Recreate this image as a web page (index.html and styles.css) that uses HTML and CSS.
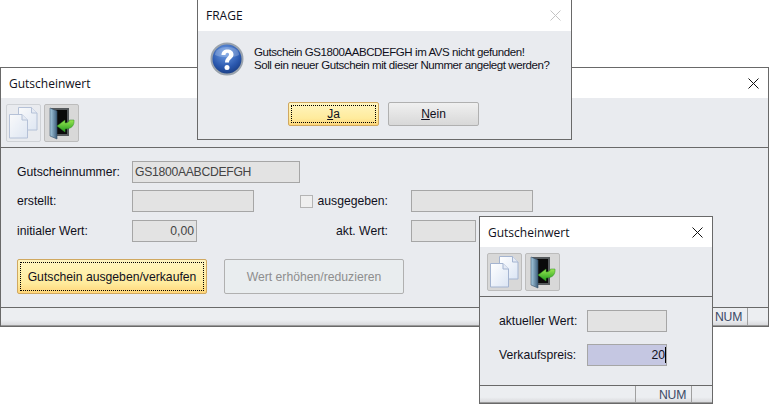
FILE: index.html
```html
<!DOCTYPE html>
<html lang="de">
  <head>
    <meta charset="UTF-8" />
    <title>Gutscheinwert</title>
    <link rel="stylesheet" href="styles.css">
  </head>
  <body>
    <svg class="defs" width="0" height="0">
      <defs>
        <linearGradient id="page" x1="0" y1="0" x2="1" y2="1">
          <stop offset="0" stop-color="#ffffff" />
          <stop offset="1" stop-color="#dbe5f4" />
        </linearGradient>
        <linearGradient id="doorside" x1="0" y1="0" x2="1" y2="0">
          <stop offset="0" stop-color="#a9cde2" />
          <stop offset="1" stop-color="#3e5f7c" />
        </linearGradient>
        <linearGradient id="arrow" x1="0" y1="0" x2="0" y2="1">
          <stop offset="0" stop-color="#9ae852" />
          <stop offset="1" stop-color="#1f9a1c" />
        </linearGradient>
        <radialGradient id="ball" cx="0.45" cy="0.3" r="0.8">
          <stop offset="0" stop-color="#6f9fe6" />
          <stop offset="0.6" stop-color="#2a57ad" />
          <stop offset="1" stop-color="#12316f" />
        </radialGradient>
        <symbol id="docs" viewBox="0 0 35 38">
          <path d="M12.500 3.500h13l5.500 5.500v17H12.500z" fill="url(#page)" stroke="#a4b4d0" />
          <path d="M25.500 3.500V9H31" fill="#e4eaf5" stroke="#a4b4d0" />
          <path d="M3.500 10.500h12.500l5.500 5.500v18H3.500z" fill="url(#page)" stroke="#a4b4d0" />
          <path d="M16 10.500V16h5.500" fill="#e4eaf5" stroke="#a4b4d0" />
        </symbol>
        <symbol id="door" viewBox="0 0 35 38">
          <path d="M7 4h18v28H7z" fill="#55595c" />
          <path d="M12 6h11v24H12z" fill="#0a0a0a" />
          <path d="M6 4l7 3v28l-7-3z" fill="url(#doorside)" stroke="#35506a" stroke-width=".6" />
          <path d="M30 16c.5 5-2 9-9 9v3l-8-6 8-6v3c3 0 4-1 4.500-3z" fill="url(#arrow)" stroke="#2f8f22" stroke-width=".5" />
        </symbol>
      </defs>
    </svg>

    <!-- main window -->
    <section class="window window--main">
      <header class="titlebar">
        <span>Gutscheinwert</span>
        <svg class="close" width="11" height="11" viewBox="0 0 11 11"><path d="M.5.5l10 10M10.500.5l-10 10" /></svg>
      </header>
      <div class="toolbar">
        <button type="button" class="tool tool--faded"><svg width="35" height="38"><use href="#docs" /></svg></button>
        <button type="button" class="tool tool--dark"><svg width="35" height="38"><use href="#door" /></svg></button>
      </div>
      <div class="content">
        <div class="form">
          <label>Gutscheinnummer:</label>
          <div class="field field--number">GS1800AABCDEFGH</div>

          <label>erstellt:</label>
          <div class="field"></div>
          <div class="side-label"><span class="checkbox"></span>ausgegeben:</div>
          <div class="field"></div>

          <label>initialer Wert:</label>
          <div class="field field--short field--right">0,00</div>
          <div class="side-label">akt. Wert:</div>
          <div class="field field--short"></div>
        </div>
        <div class="actions">
          <button type="button" class="btn btn--default btn--sell"><span>Gutschein ausgeben/verkaufen</span></button>
          <button type="button" class="btn btn--disabled" disabled>Wert erhöhen/reduzieren</button>
        </div>
      </div>
      <footer class="statusbar">
        <span class="pane pane--num">NUM</span>
        <span class="pane pane--end"></span>
      </footer>
    </section>

    <!-- question dialog -->
    <section class="window window--dialog">
      <header class="titlebar">
        <span>FRAGE</span>
        <svg class="close close--off" width="11" height="11" viewBox="0 0 11 11"><path d="M.5.5l10 10M10.500.5l-10 10" /></svg>
      </header>
      <div class="dialog-body">
        <div class="message">
          <svg class="question" width="34" height="34" viewBox="0 0 34 34">
            <circle cx="17" cy="17" r="15.500" fill="url(#ball)" stroke="#9aa3ad" stroke-width="2" />
            <path d="M17 5c8 0 12 3 12 8-5 3-18 3-24 0 0-5 5-8 12-8z" fill="#ffffff" opacity=".22" />
            <path d="M11.500 13c0-3.500 2.500-5.500 6-5.500s6 2 6 5c0 4-4.500 4.500-4.500 8h-4c0-5 4-5.500 4-8 0-1-.6-1.700-1.600-1.700-1.300 0-1.900 1-1.900 2.200z" fill="#ffffff" />
            <circle cx="17" cy="25.500" r="2.500" fill="#ffffff" />
          </svg>
          <p>Gutschein GS1800AABCDEFGH im AVS nicht gefunden!<br>Soll ein neuer Gutschein mit dieser Nummer angelegt werden?</p>
        </div>
        <div class="dialog-actions">
          <button type="button" class="btn btn--default btn--dialog"><span><u>J</u>a</span></button>
          <button type="button" class="btn btn--plain btn--dialog"><u>N</u>ein</button>
        </div>
      </div>
    </section>

    <!-- small window -->
    <section class="window window--small">
      <header class="titlebar">
        <span>Gutscheinwert</span>
        <svg class="close" width="11" height="11" viewBox="0 0 11 11"><path d="M.5.5l10 10M10.500.5l-10 10" /></svg>
      </header>
      <div class="toolbar">
        <button type="button" class="tool tool--dark"><svg width="35" height="38"><use href="#docs" /></svg></button>
        <button type="button" class="tool tool--dark"><svg width="35" height="38"><use href="#door" /></svg></button>
      </div>
      <div class="content content--small">
        <div class="row">
          <label>aktueller Wert:</label>
          <div class="field field--price"></div>
        </div>
        <div class="row">
          <label>Verkaufspreis:</label>
          <div class="field field--price field--input">20<i class="caret"></i></div>
        </div>
      </div>
      <footer class="statusbar">
        <span class="pane pane--blank"></span>
        <span class="pane pane--num">NUM</span>
        <span class="pane pane--end"></span>
      </footer>
    </section>
  </body>
</html>
```

FILE: styles.css
```css
* {
  box-sizing: border-box;
}

body {
  margin: 0;
  width: 769px;
  height: 405px;
  position: relative;
  overflow: hidden;
  background-color: #ffffff;
  font-family: "Liberation Sans", Arial, sans-serif;
  font-size: 12.2px;
  color: #101020;
}

.defs {
  position: absolute;
}

/* Windows sit on a free desktop */
.window {
  position: absolute;
  display: flex;
  flex-direction: column;
  background-color: #e9ebef;
  border: 1px solid #696969;
}
.window--main {
  left: 0;
  top: 67px;
  width: 769px;
  height: 260px;
}
.window--dialog {
  left: 197px;
  top: -1px;
  width: 375px;
  height: 141px;
}
.window--small {
  left: 479px;
  top: 216px;
  width: 234px;
  height: 188px;
}

.titlebar {
  height: 30px;
  flex: none;
  display: flex;
  align-items: center;
  justify-content: space-between;
  padding: 0 9px 0 8px;
  background-color: #ffffff;
  font-family: "Open Sans", sans-serif;
  font-size: 12px;
}
.close {
  fill: none;
  stroke: #111111;
  stroke-width: 1;
}
.close--off {
  stroke: #c4c4c4;
  margin-right: 1px;
  margin-top: -1px;
}
.window--dialog .titlebar {
  height: 31px;
}

/* Toolbar */
.toolbar {
  height: 50px;
  flex: none;
  display: flex;
  align-items: center;
  gap: 3px;
  padding-left: 7px;
  border-bottom: 1px solid #696969;
}
.window--main .toolbar {
  padding-left: 5px;
}
.tool {
  width: 35px;
  height: 38px;
  padding: 0;
  border: 1px solid #bcbcbc;
  border-radius: 2px;
  background-color: #e9ebef;
}
.tool svg {
  display: block;
  margin: -1px;
}
.tool--dark {
  background-color: #d8d8d8;
}
.tool--faded {
  border-color: #cfd2d6;
}
.tool--faded svg {
  opacity: .75;
}

/* Form in main window */
.content {
  flex: 1;
  padding: 13px 0 0 16px;
}
.form {
  display: grid;
  grid-template-columns: 115px 122px 157px 122px;
  grid-template-rows: 29px 30px 22px;
  align-items: start;
}
label,
.side-label {
  line-height: 22px;
}
.side-label {
  display: flex;
  align-items: center;
  justify-content: flex-end;
  padding-right: 23px;
}
.checkbox {
  width: 13px;
  height: 13px;
  margin-right: 5px;
  background-color: #efefef;
  border: 1px solid #b4b4b4;
}
.field {
  height: 22px;
  line-height: 20px;
  padding: 0 2px;
  background-color: #e3e3e3;
  border: 1px solid #a6a6a6;
  color: #444444;
}
.field--number {
  width: 168px;
  grid-column: 2 / -1;
  white-space: nowrap;
  letter-spacing: -.3px;
}
.field--short {
  width: 65px;
}
.field--right {
  text-align: right;
}

.actions {
  display: flex;
  gap: 17px;
  margin-top: 17px;
}
.btn {
  height: 35px;
  padding: 0;
  border-radius: 2px;
  border: 1px solid #b0b0b0;
  font-family: inherit;
  font-size: 12.2px;
  color: #101020;
}
.btn--default {
  padding: 2px;
  border-color: #d0a860;
  background: linear-gradient(#fff5c0, #ffeb9c 70%, #ffd67a);
}
.btn--default span {
  display: flex;
  height: 100%;
  align-items: center;
  justify-content: center;
  border: 1px dotted #000000;
}
.btn--sell {
  width: 190px;
}
.btn--disabled {
  width: 180px;
  background-color: #e9edef;
  color: #8e8e8e;
}
.btn--plain {
  background: linear-gradient(#f0f0f0, #d8d8d8);
}
.btn--dialog {
  width: 91px;
  height: 24px;
  font-size: 12px;
}

/* Status bars */
.statusbar {
  height: 19px;
  flex: none;
  display: flex;
  justify-content: flex-end;
  border-top: 1px solid #696969;
  border-bottom: 1px solid #9a9a9a;
  background: linear-gradient(#eceef1 70%, #d9dadd);
  line-height: 17px;
  color: #3b4a66;
}
.window--small .statusbar {
  height: 18px;
}
.pane {
  border-right: 1px solid #a0a0a0;
  padding: 1px 4px 0 2px;
}
.pane--num {
  width: 35px;
  letter-spacing: -.2px;
}
.pane--blank {
  width: 22px;
  padding: 0;
  border-left: 1px solid #a0a0a0;
  border-right: none;
}
.pane--end {
  width: 20px;
  border-right: none;
  padding: 0;
}

/* Question dialog */
.dialog-body {
  flex: 1;
  display: flex;
  flex-direction: column;
  padding: 11px 0 0 12px;
}
.message {
  display: flex;
  align-items: center;
  gap: 10px;
}
.message p {
  margin: 0;
  font-size: 11.5px;
  line-height: 13px;
  letter-spacing: -.42px;
  white-space: nowrap;
}
.dialog-actions {
  display: flex;
  gap: 9px;
  margin-top: 26px;
  padding-left: 78px;
}

/* Small window form */
.content--small {
  display: flex;
  flex-direction: column;
  gap: 12px;
  padding: 13px 0 0 19px;
}
.row {
  display: flex;
  justify-content: space-between;
  width: 168px;
}
.field--price {
  width: 80px;
  color: #101020;
}
.field--input {
  display: flex;
  justify-content: flex-end;
  align-items: center;
  padding: 0;
  background-color: #c5c7e2;
}
.caret {
  width: 1px;
  height: 16px;
  background-color: #000000;
}
```
